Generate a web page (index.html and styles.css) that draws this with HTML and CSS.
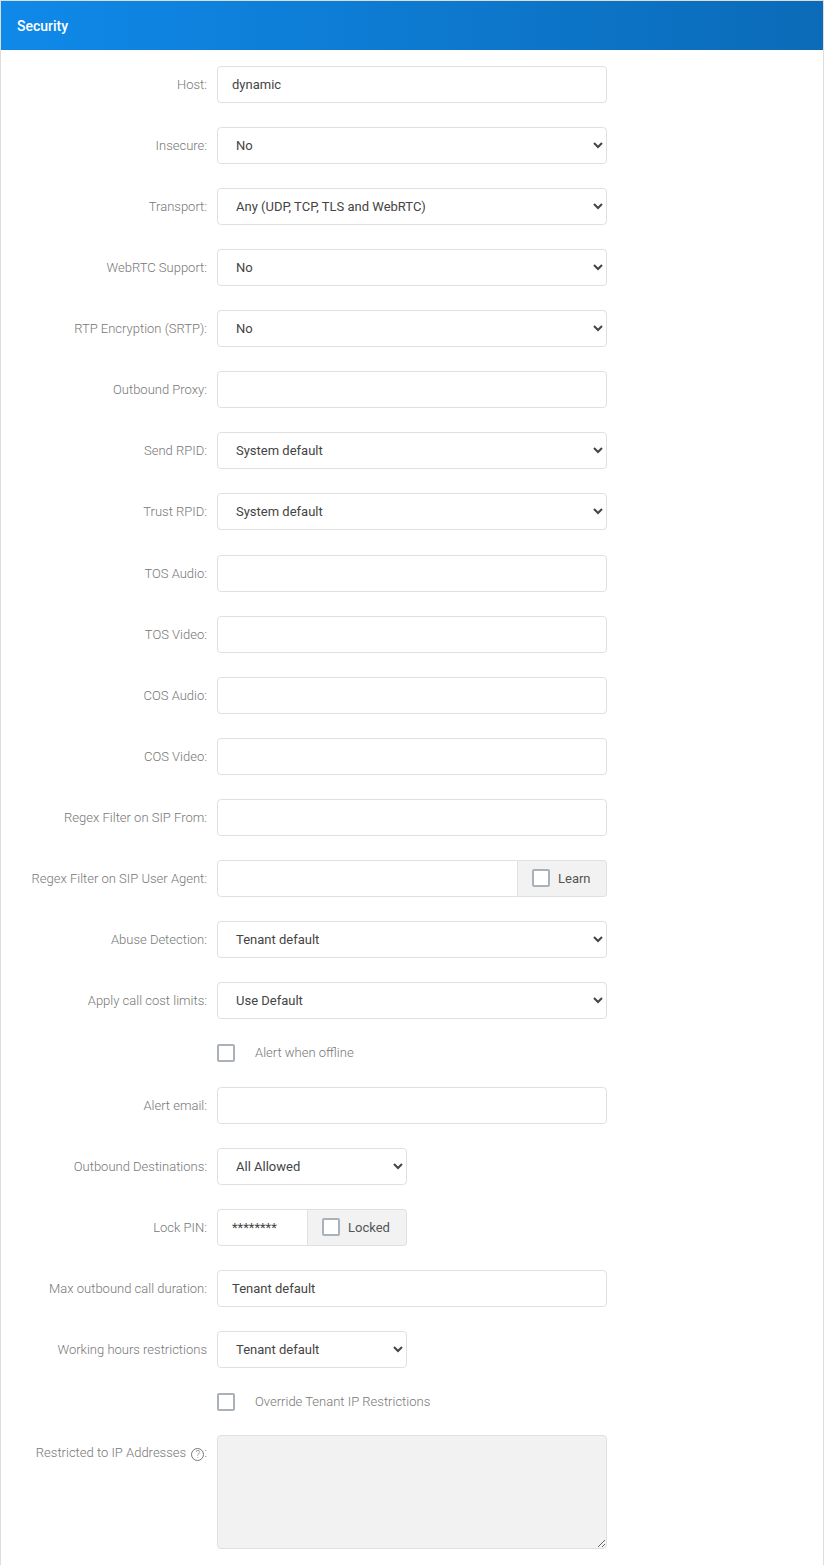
FILE: index.html
```html
<!DOCTYPE html>
<html lang="en">
<head>
    <meta charset="UTF-8">
    <title>Security</title>
    <link rel="stylesheet" href="styles.css">
</head>
<body>
    <section class="panel">
        <header class="panel-heading">Security</header>

        <form class="panel-body">
            <div class="form-row">
                <label class="form-label">Host:</label>
                <input type="text" class="form-control" value="dynamic">
            </div>

            <div class="form-row">
                <label class="form-label">Insecure:</label>
                <select class="form-control">
                    <option>No</option>
                </select>
            </div>

            <div class="form-row">
                <label class="form-label">Transport:</label>
                <select class="form-control">
                    <option>Any (UDP, TCP, TLS and WebRTC)</option>
                </select>
            </div>

            <div class="form-row">
                <label class="form-label">WebRTC Support:</label>
                <select class="form-control">
                    <option>No</option>
                </select>
            </div>

            <div class="form-row">
                <label class="form-label">RTP Encryption (SRTP):</label>
                <select class="form-control">
                    <option>No</option>
                </select>
            </div>

            <div class="form-row">
                <label class="form-label">Outbound Proxy:</label>
                <input type="text" class="form-control">
            </div>

            <div class="form-row">
                <label class="form-label">Send RPID:</label>
                <select class="form-control">
                    <option>System default</option>
                </select>
            </div>

            <div class="form-row">
                <label class="form-label">Trust RPID:</label>
                <select class="form-control">
                    <option>System default</option>
                </select>
            </div>

            <div class="form-row">
                <label class="form-label">TOS Audio:</label>
                <input type="text" class="form-control">
            </div>

            <div class="form-row">
                <label class="form-label">TOS Video:</label>
                <input type="text" class="form-control">
            </div>

            <div class="form-row">
                <label class="form-label">COS Audio:</label>
                <input type="text" class="form-control">
            </div>

            <div class="form-row">
                <label class="form-label">COS Video:</label>
                <input type="text" class="form-control">
            </div>

            <div class="form-row">
                <label class="form-label">Regex Filter on SIP From:</label>
                <input type="text" class="form-control">
            </div>

            <div class="form-row">
                <label class="form-label">Regex Filter on SIP User Agent:</label>
                <div class="input-group">
                    <input type="text" class="form-control">
                    <span class="input-addon addon-learn">
                        <span class="check"></span>
                        Learn
                    </span>
                </div>
            </div>

            <div class="form-row">
                <label class="form-label">Abuse Detection:</label>
                <select class="form-control">
                    <option>Tenant default</option>
                </select>
            </div>

            <div class="form-row">
                <label class="form-label">Apply call cost limits:</label>
                <select class="form-control">
                    <option>Use Default</option>
                </select>
            </div>

            <div class="form-row check-row">
                <span></span>
                <div class="check-line">
                    <span class="check"></span>
                    <span class="check-text">Alert when offline</span>
                </div>
            </div>

            <div class="form-row">
                <label class="form-label">Alert email:</label>
                <input type="text" class="form-control">
            </div>

            <div class="form-row">
                <label class="form-label">Outbound Destinations:</label>
                <select class="form-control narrow">
                    <option>All Allowed</option>
                </select>
            </div>

            <div class="form-row">
                <label class="form-label">Lock PIN:</label>
                <div class="input-group narrow">
                    <input type="text" class="form-control" value="********">
                    <span class="input-addon addon-locked">
                        <span class="check"></span>
                        Locked
                    </span>
                </div>
            </div>

            <div class="form-row">
                <label class="form-label">Max outbound call duration:</label>
                <input type="text" class="form-control" value="Tenant default">
            </div>

            <div class="form-row">
                <label class="form-label">Working hours restrictions</label>
                <select class="form-control narrow">
                    <option>Tenant default</option>
                </select>
            </div>

            <div class="form-row check-row">
                <span></span>
                <div class="check-line">
                    <span class="check"></span>
                    <span class="check-text">Override Tenant IP Restrictions</span>
                </div>
            </div>

            <div class="form-row top">
                <label class="form-label">
                    Restricted to IP Addresses
                    <span class="help">?</span>:
                </label>
                <textarea class="form-control area" disabled></textarea>
            </div>
        </form>
    </section>
</body>
</html>
```

FILE: styles.css
```css
/* General Styles */
* {
    margin: 0;
    padding: 0;
    box-sizing: border-box;
}

body {
    font-family: Roboto, "Liberation Sans", sans-serif;
    font-size: 13px;
    color: #444;
    background: #fff;
}

.panel {
    border: 1px solid #ddd;
    border-bottom: none;
    min-height: 1565px;
}

.panel-heading {
    height: 49px;
    padding: 0 16px;
    display: flex;
    align-items: center;
    background: linear-gradient(90deg, #0f89e9, #0b6bb8);
    color: #fff;
    font-size: 14px;
    font-weight: 500;
}

.panel-body {
    padding-top: 16px;
}

/* Form rows */
.form-row {
    display: grid;
    grid-template-columns: 206px 390px;
    column-gap: 10px;
    align-items: center;
    margin-bottom: 24.07px;
}

.form-row.top {
    align-items: start;
}

.form-row.top .form-label {
    padding-top: 10px;
}

.form-label {
    text-align: right;
    color: #777;
    font-weight: 300;
    font-size: 13px;
}

.form-control {
    width: 100%;
    height: 37px;
    border: 1px solid #e0e0e0;
    border-radius: 4px;
    background: #fff;
    padding: 0 14px;
    font-family: inherit;
    font-size: 13px;
    color: #444;
    outline: none;
}

select.form-control {
    padding: 0 10px 0 14px;
}

.form-control.narrow,
.input-group.narrow {
    width: 190px;
}

.area {
    height: 114px;
    background: #f2f2f2;
    resize: vertical;
}

/* Input with an addon on the right */
.input-group {
    display: flex;
    width: 100%;
}

.input-group .form-control {
    flex: 1;
    min-width: 0;
    border-radius: 4px 0 0 4px;
}

.input-addon {
    display: flex;
    align-items: center;
    gap: 8px;
    background: #f2f2f2;
    border: 1px solid #e0e0e0;
    border-left: none;
    border-radius: 0 4px 4px 0;
    color: #555;
    font-size: 13px;
    padding: 0 14px;
}

.addon-learn {
    width: 89px;
}

.addon-locked {
    width: 99px;
}

/* Checkboxes */
.check {
    display: inline-block;
    width: 18px;
    height: 18px;
    border: 2px solid #aab1b9;
    border-radius: 2px;
    background: #fff;
    flex: none;
}

.check-row {
    height: 19.5px;
}

.check-line {
    display: flex;
    align-items: center;
    gap: 20px;
}

.check-text {
    color: #777;
    font-weight: 300;
}

.help {
    display: inline-flex;
    align-items: center;
    justify-content: center;
    width: 13px;
    height: 13px;
    border: 1px solid #777;
    border-radius: 50%;
    font-size: 10px;
    font-weight: 300;
    vertical-align: -1px;
    margin-left: 2px;
}
```
